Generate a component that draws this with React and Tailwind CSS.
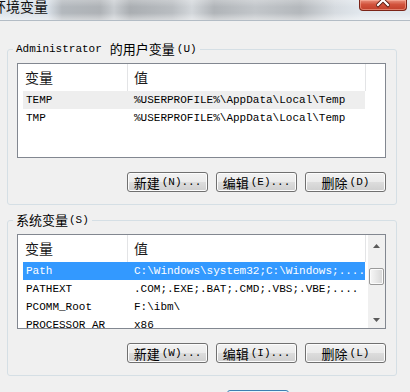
import React from "react";

const MONO = "font-['Liberation_Mono','Noto_Sans_CJK_SC',monospace]";
const CJK = "font-['Noto_Sans_CJK_SC',sans-serif]";

function Btn({ label, hot }) {
  return (
    <div className="w-[81px] h-[20px] rounded-[3px] border border-[#707070] bg-[linear-gradient(180deg,#f2f2f2_0%,#ebebeb_50%,#dddddd_50%,#cfcfcf_100%)] shadow-[inset_0_0_0_1px_#fcfcfc] flex items-center justify-center text-black">
      <span className={`${CJK} text-[13px] leading-none`}>{label}</span>
      <span className={`${MONO} text-[11px] leading-none ml-[2px]`}>{hot}</span>
    </div>
  );
}

function Row({ name, value, sel, hover }) {
  const tone = sel
    ? "bg-[#3399ff] text-white"
    : hover
    ? "bg-[#eeeeee] text-black"
    : "text-black";
  return (
    <div className={`flex h-[18px] shrink-0 items-center w-[342px] ${tone}`}>
      <div className={`${MONO} text-[11px] w-[104px] pl-[3px] overflow-hidden whitespace-nowrap`}>{name}</div>
      <div className={`${MONO} text-[11px] w-[238px] pl-[7px] overflow-hidden whitespace-nowrap`}>{value}</div>
    </div>
  );
}

function Scrollbar() {
  return (
    <div className="w-[17px] shrink-0 bg-[#f0f0f0] flex flex-col">
      <div className="h-[17px] flex items-center justify-center pt-[4px]">
        <svg width="7" height="4" viewBox="0 0 7 4">
          <path d="M0 4 L3.5 0 L7 4Z" fill="#5a5a5a" />
        </svg>
      </div>
      <div className="flex-1 flex flex-col pt-[16px]">
        <div className="mx-[1px] h-[17px] rounded-[2px] border border-[#9a9a9a] bg-[linear-gradient(90deg,#f7f7f7,#e4e4e4_60%,#d6d6d6)] shadow-[inset_0_0_0_1px_#fbfbfb]" />
      </div>
      <div className="h-[17px] flex items-center justify-center">
        <svg width="7" height="4" viewBox="0 0 7 4">
          <path d="M0 0 L3.5 4 L7 0Z" fill="#5a5a5a" />
        </svg>
      </div>
    </div>
  );
}

function ListView({ rows, scroll }) {
  return (
    <div className="h-[95px] border border-[#828790] bg-white flex overflow-hidden">
      <div className="flex-1 min-w-0 flex flex-col overflow-hidden">
        <div className="h-[27px] shrink-0 flex bg-white">
          <div className={`${CJK} w-[110px] border-r border-[#e3e4e6] flex items-center pl-[7px] text-[14px] text-[#1a1a1a]`}>变量</div>
          <div className={`${CJK} w-[238px] border-r border-[#e3e4e6] flex items-center pl-[6px] text-[14px] text-[#1a1a1a]`}>值</div>
        </div>
        <div className="pl-[5px] flex flex-col">
          {rows.map((r) => (
            <Row key={r.name} {...r} />
          ))}
        </div>
      </div>
      {scroll ? <Scrollbar /> : null}
    </div>
  );
}

export default function App() {
  const userRows = [
    { name: "TEMP", value: "%USERPROFILE%\\AppData\\Local\\Temp", hover: true },
    { name: "TMP", value: "%USERPROFILE%\\AppData\\Local\\Temp" },
  ];
  const sysRows = [
    { name: "Path", value: "C:\\Windows\\system32;C:\\Windows;....", sel: true },
    { name: "PATHEXT", value: ".COM;.EXE;.BAT;.CMD;.VBS;.VBE;...." },
    { name: "PCOMM_Root", value: "F:\\ibm\\" },
    { name: "PROCESSOR_AR", value: "x86" },
  ];

  return (
    <div className="w-[410px] h-[392px] overflow-hidden bg-[#f0f0f0] flex flex-col">
      {/* title bar */}
      <div className="h-[21px] shrink-0 flex items-start justify-between border-b border-[#b3bcc5] [background-image:linear-gradient(180deg,rgba(255,255,255,0.25),rgba(255,255,255,0)_35%,rgba(255,255,255,0)_65%,rgba(255,255,255,0.45)),linear-gradient(90deg,#dde4eb_0px,#d9e0e7_48px,#b3b8bd_62px,#aeb2b6_100px,#c9cdd1_114px,#aaaeb2_130px,#b9bdc1_172px,#d3d7db_192px,#b0b4b8_214px,#c2c6ca_255px,#b4b8bc_300px,#d6dbe0_335px,#e1e7ed_360px)]">
        <span className={`${CJK} ml-[-8px] mt-[-2px] text-[14px] leading-[16px] text-[#111]`}>环境变量</span>
        <div className="mr-[3px] w-[48px] h-[11px] rounded-b-[4px] border border-t-0 border-[#7a2418] bg-[linear-gradient(180deg,#e9907d_0%,#d2533c_45%,#c13f2a_100%)] shadow-[inset_0_0_0_1px_rgba(255,190,170,0.5)] flex justify-center overflow-hidden">
          <svg width="14" height="10" viewBox="0 0 14 10">
            <path d="M2 -5 L12 5 M12 -5 L2 5" stroke="#5a1a10" strokeWidth="4" strokeLinecap="square" />
            <path d="M2 -5 L12 5 M12 -5 L2 5" stroke="#ffffff" strokeWidth="2.2" strokeLinecap="square" />
          </svg>
        </div>
      </div>

      {/* body */}
      <div className="flex flex-col pl-[7px] pt-[21px]">
        <fieldset className="w-[390px] border border-[#d5dfe5] rounded-[3px] pl-[9px] pr-[10px] pb-[12px]">
          <legend className="ml-[-4px] px-[3px] leading-[14px] h-[14px] flex items-center text-black">
            <span className={`${MONO} text-[11px]`}>Administrator</span>
            <span className={`${CJK} text-[13px] ml-[8px]`}>的用户变量</span>
            <span className={`${MONO} text-[11px] ml-[2px]`}>(U)</span>
          </legend>
          <div className="mt-[7px]">
            <ListView rows={userRows} />
          </div>
          <div className="mt-[14px] flex justify-end gap-[8px]">
            <Btn label="新建" hot="(N)..." />
            <Btn label="编辑" hot="(E)..." />
            <Btn label="删除" hot="(D)" />
          </div>
        </fieldset>

        <fieldset className="mt-[8px] w-[390px] border border-[#d5dfe5] rounded-[3px] pl-[9px] pr-[10px] pb-[12px]">
          <legend className="ml-[-4px] px-[3px] leading-[14px] h-[14px] flex items-center text-black">
            <span className={`${CJK} text-[13px]`}>系统变量</span>
            <span className={`${MONO} text-[11px] ml-[1px]`}>(S)</span>
          </legend>
          <div className="mt-[7px]">
            <ListView rows={sysRows} scroll />
          </div>
          <div className="mt-[14px] flex justify-end gap-[8px]">
            <Btn label="新建" hot="(W)..." />
            <Btn label="编辑" hot="(I)..." />
            <Btn label="删除" hot="(L)" />
          </div>
        </fieldset>

        <div className="mt-[14px] ml-[220px] w-[62px] h-[20px] rounded-[3px] border border-[#3c7fb1] bg-[linear-gradient(180deg,#eaf6fd,#d9f0fc)]" />
      </div>
    </div>
  );
}
